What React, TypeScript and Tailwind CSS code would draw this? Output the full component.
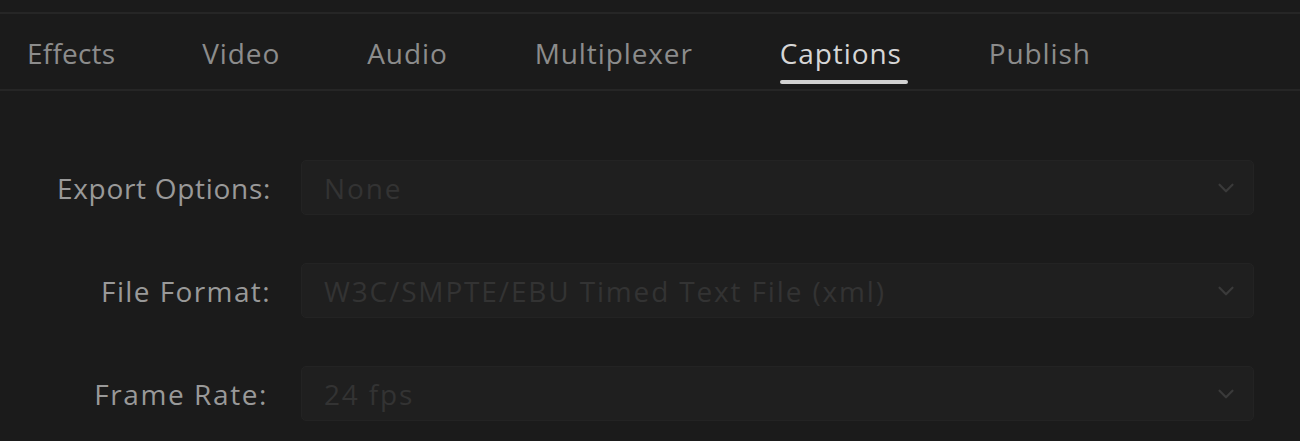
import { ChevronDown } from 'lucide-react'

const tabs = ['Effects', 'Video', 'Audio', 'Multiplexer', 'Captions', 'Publish']

const fields = [
  { label: 'Export Options:', value: 'None', pr: 'pr-0 tracking-[0.7px]' },
  { label: 'File Format:', value: 'W3C/SMPTE/EBU Timed Text File (xml)', pr: 'pr-0 tracking-[1.4px]' },
  { label: 'Frame Rate:', value: '24 fps', pr: 'pr-[3px] tracking-[1.6px]' },
]

export default function App() {
  const active = 'Captions'

  return (
    <div
      className="w-[1300px] h-[441px] overflow-hidden bg-[#1b1b1b]"
      style={{ fontFamily: '"Open Sans", "Noto Sans", sans-serif' }}
    >
      <div className="h-[12px]" />
      {/* Tabs */}
      <div className="border-t-2 border-b-2 border-[#262626] h-[79px] flex items-stretch pl-[27px] gap-[87px]">
        {tabs.map((tab) => (
          <div key={tab} className="relative flex items-center pt-[2px]">
            <span
              className={`text-[28px] leading-none ${
                tab === 'Effects' ? 'tracking-[0.2px]' : 'tracking-[0.9px]'
              } ${tab === active ? 'text-[#d6d6d6]' : 'text-[#8c8c8c]'}`}
            >
              {tab}
            </span>
            {tab === active && (
              <div className="absolute left-0 right-[-6px] bottom-[5px] h-[4px] rounded-full bg-[#d2d2d2]" />
            )}
          </div>
        ))}
      </div>

      {/* Fields */}
      <div className="pt-[69px] flex flex-col gap-[48px]">
        {fields.map((f) => (
          <div key={f.label} className="flex items-center">
            <div className={`w-[271px] text-right text-[28px] text-[#999999] leading-none ${f.pr}`}>
              {f.label}
            </div>
            <div className="ml-[30px] w-[953px] h-[55px] rounded-[5px] bg-[#1f1f1f] border border-[#232323] flex items-center justify-between pl-[22px] pr-[14px]">
              <span className="text-[28px] tracking-[1.85px] text-[#333333] leading-none">{f.value}</span>
              <ChevronDown className="w-[26px] h-[26px] text-[#3a3a3a]" strokeWidth={2} />
            </div>
          </div>
        ))}
      </div>
    </div>
  )
}
